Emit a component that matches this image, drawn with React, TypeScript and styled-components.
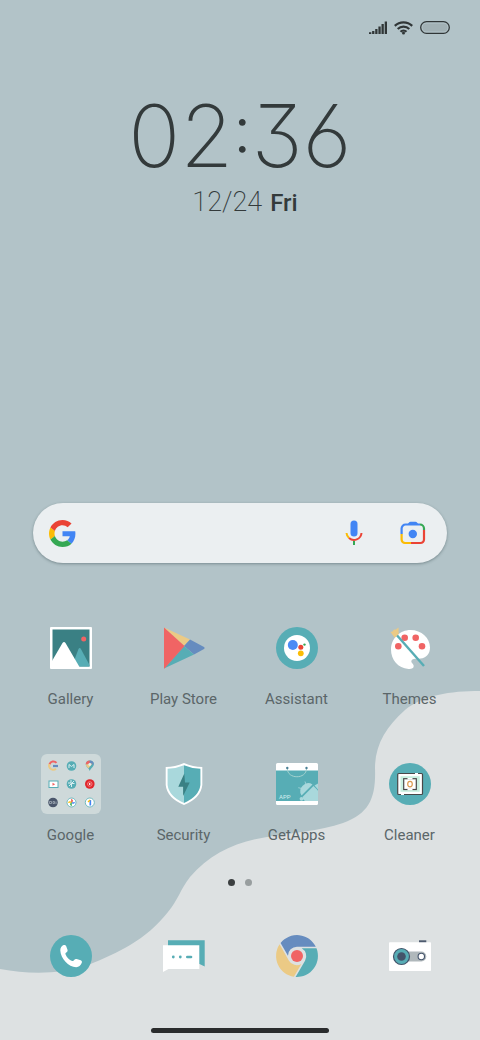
import React from 'react';
import styled, { createGlobalStyle } from 'styled-components';

const teal = '#57adb5';
const tealLight = '#a9d8dc';
const tealDark = '#3a8084';
const coral = '#f06464';
const sand = '#ebca85';
const indigo = '#668cbf';
const ink = '#333a3b';

const GlobalStyle = createGlobalStyle`
  *, *::before, *::after { box-sizing: border-box; }
  body { margin: 0; background: #dde1e2; font-family: Roboto, sans-serif; }
`;

const Screen = styled.div`
  position: relative;
  isolation: isolate;
  min-height: 100vh;
  display: flex;
  flex-direction: column;
  background: #b2c3c8;
  overflow: hidden;
`;

const Wallpaper = styled.svg`
  position: absolute;
  inset: 0;
  z-index: -1;
  width: 100%;
  height: 100%;
`;

const StatusBar = styled.header`
  display: flex;
  justify-content: flex-end;
  align-items: center;
  gap: 7px;
  padding: 20px 30px 0;
  height: 35px;
  color: #303637;
`;

const ClockWidget = styled.section`
  display: flex;
  flex-direction: column;
  align-items: center;
  padding-top: 51px;
  color: ${ink};
`;

const Time = styled.time`
  display: flex;
  align-items: center;
  font: 170 86px/100px Inter, sans-serif;
  font-feature-settings: "ss01", "cv09";
`;

const Colon = styled.span`
  font-size: 64px;
  font-weight: 260;
  font-feature-settings: "case";
`;

const DateLine = styled.p`
  display: flex;
  align-items: baseline;
  gap: 8px;
  margin: 0;
  padding: 0 0 0 10px;
  font-size: 27px;
  font-weight: 200;
  line-height: 32px;
`;

const Weekday = styled.span`
  font-size: 24px;
  font-weight: 500;
`;

const SearchBar = styled.form`
  display: flex;
  align-items: center;
  height: 60px;
  margin: auto 33px 0;
  padding: 0 18px 0 16px;
  border-radius: 30px;
  background: #ebeff1;
  box-shadow: 0 1px 3px rgba(50, 70, 75, 0.45);
`;

const SearchInput = styled.input`
  flex: 1;
  min-width: 0;
  height: 40px;
  margin: 0 12px;
  border: 0;
  outline: 0;
  background: transparent;
  font: 18px Roboto, sans-serif;
  color: ${ink};
`;

const SearchAction = styled.button`
  display: grid;
  place-items: center;
  width: 32px;
  height: 40px;
  padding: 0;
  border: 0;
  background: none;
  & + & { margin-left: 27px; }
`;

const IconGrid = styled.main`
  display: grid;
  grid-template-columns: repeat(4, 1fr);
  row-gap: 45px;
  padding: 55px 14px 0;
`;

const AppButton = styled.button`
  display: flex;
  flex-direction: column;
  align-items: center;
  gap: 11px;
  padding: 0;
  border: 0;
  background: none;
  color: #5b6669;
  font: 15px/20px Roboto, sans-serif;
`;

const IconSlot = styled.span`
  display: grid;
  place-items: center;
  height: 60px;
`;

const Folder = styled.span`
  width: 60px;
  height: 60px;
  border-radius: 6px;
  background: rgba(222, 231, 229, 0.62);
`;

const Pager = styled.nav`
  display: flex;
  justify-content: center;
  gap: 10px;
  padding-top: 34px;
`;

const PageDot = styled.button<{ $active?: boolean }>`
  width: 7px;
  height: 7px;
  padding: 0;
  border: 0;
  border-radius: 50%;
  background: ${(p) => (p.$active ? '#3b3f40' : '#989e9f')};
`;

const Dock = styled.footer`
  display: grid;
  grid-template-columns: repeat(4, 1fr);
  padding: 40px 14px 0;
`;

const HomeBar = styled.div`
  width: 37%;
  height: 5px;
  margin: 42px auto 7px;
  border-radius: 3px;
  background: #2a2c2d;
`;

function Icon({ children }: { children: React.ReactNode }) {
  return (
    <svg width="42" height="42" viewBox="0 0 42 42" overflow="visible" aria-hidden="true">
      {children}
    </svg>
  );
}

const GoogleG = () => (
  <svg width="27" height="27" viewBox="0 0 48 48" aria-hidden="true">
    <path fill="#fbbc05" d="M10.530 28.590c-.480-1.450-.760-2.990-.760-4.590s.270-3.140.760-4.590l-7.980-6.190C.920 16.460 0 20.120 0 24c0 3.880.920 7.540 2.560 10.780l7.970-6.190z" />
    <path fill="#4285f4" d="M46.980 24.550c0-1.570-.150-3.090-.380-4.550H24v9.020h12.940c-.580 2.960-2.260 5.480-4.780 7.180l7.730 6c4.510-4.180 7.090-10.360 7.090-17.650z" />
    <path fill="#34a853" d="M24 48c6.480 0 11.930-2.130 15.890-5.810l-7.730-6c-2.150 1.450-4.920 2.300-8.160 2.300-6.260 0-11.570-4.220-13.470-9.910l-7.980 6.190C6.510 42.620 14.620 48 24 48z" />
    <path fill="#ea4335" d="M24 9.500c3.540 0 6.710 1.220 9.210 3.600l6.850-6.850C35.900 2.380 30.470 0 24 0 14.620 0 6.510 5.380 2.560 13.220l7.980 6.190C12.430 13.720 17.740 9.500 24 9.500z" />
  </svg>
);

const Mic = () => (
  <svg width="18" height="26" viewBox="0 0 18 26" fill="none" strokeWidth="2" aria-hidden="true">
    <rect x="5.500" y="0.500" width="7" height="16" rx="3.500" fill="#4285f4" />
    <path d="M1.500 13A7.500 7.500 0 0 0 4 18" stroke="#fbbc05" />
    <path d="M4 18A7.500 7.500 0 0 0 16.500 13" stroke="#ea4335" />
    <path d="M9 21v4" stroke="#34a853" />
  </svg>
);

const Lens = () => (
  <svg width="26" height="24" viewBox="0 0 26 24" fill="none" strokeWidth="2.200" aria-hidden="true">
    <path d="M7 4 9 1.500Q9.500.7 10.500.7h5q1 0 1.500.8L19 4z" fill="#4285f4" />
    <path d="M1.600 13V7.500a4 4 0 0 1 4-4H20" stroke="#4285f4" />
    <path d="M20 3.500a4 4 0 0 1 4 4V9" stroke="#34a853" />
    <path d="M24 9v9.500a3.500 3.500 0 0 1-3.500 3.500H11" stroke="#ea4335" />
    <path d="M11 22H5a3.500 3.500 0 0 1-3.400-3.500V13" stroke="#fbbc05" />
    <circle cx="12.800" cy="13" r="4.200" fill="#4285f4" />
  </svg>
);

const Gallery = () => (
  <Icon>
    <rect width="42" height="42" rx="1" fill="#fff" />
    <path d="M2.500 2.500h37v37h-37z" fill={tealDark} />
    <path d="M22 39.500 28.500 22q1.200-2 2.400 0l8.600 16v1.500z" fill={teal} />
    <path d="M2 34 12.500 16q1.500-2 3 0L29.500 40H2z" fill="#fff" />
    <circle cx="33.700" cy="12" r="2.500" fill={coral} />
  </Icon>
);

const PlayStore = () => (
  <Icon>
    <path d="M1 .5 27 12.500 21 19z" fill={sand} />
    <path d="M27 12.500 41 20q1.500 1 0 2l-10 5.500L21 19z" fill={indigo} />
    <path d="M1 41.500 31 27.500 21 19z" fill={teal} />
    <path d="M1 .5 21.500 19 1.500 41.500H1z" fill={coral} />
  </Icon>
);

const Assistant = () => (
  <Icon>
    <circle cx="21" cy="21" r="21" fill={teal} />
    <circle cx="21" cy="21" r="13" fill="#fff" />
    <circle cx="16.800" cy="18" r="5" fill="#4c8bf5" />
    <circle cx="24.800" cy="20.300" r="2.500" fill="#ea4335" />
    <circle cx="24.800" cy="26.300" r="2.900" fill="#fbbc05" />
    <circle cx="28.500" cy="17.600" r="1.200" fill="#34a853" />
  </Icon>
);

const Themes = () => (
  <Icon>
    <path d="M21.500 3C32.500 3 41 11 41 20.500 41 27 37 31 31.500 31.500L28 32c-2.500-.7-5 0-5.600 1.800-.6 2 2.300 3.200 2.300 5.200 0 2.400-2.300 3.200-5.200 3C9 41.300 2 32.500 2 22.500 2 11.500 11 3 21.500 3z" fill="#fff" />
    <g fill={coral}>
      <circle cx="9.300" cy="19.300" r="3.300" />
      <circle cx="15.700" cy="10.700" r="3.300" />
      <circle cx="26.700" cy="10.700" r="3.300" />
      <circle cx="33" cy="19.300" r="3.300" />
    </g>
    <path d="M7.700 8 35 39" stroke={teal} strokeWidth="2.400" />
    <path d="m1.500 5 2-.6L5 2.500l1.500.2L9.500.5 9.700 7l-4 3.800z" fill={sand} />
  </Icon>
);

const Security = () => (
  <Icon>
    <path d="M21 0Q30 4 39.300 4v18Q38 35 21 42 4 35 2.700 22V4Q12 4 21 0z" fill="#fff" />
    <path d="M21 2.200Q13 5.600 4.600 5.800V22Q6 33.500 21 40z" fill={tealLight} />
    <path d="M21 2.200Q29 5.600 37.400 5.800V22Q36 33.500 21 40z" fill={teal} />
    <path d="m21.300 10.500-6 13.200h4.800V33l6.600-13.500H22z" fill={tealDark} />
  </Icon>
);

const BagLabel = styled.text`
  font: 6px Roboto, sans-serif;
  fill: #d6eef0;
`;

const GetApps = () => (
  <Icon>
    <rect width="42" height="42" rx="1.500" fill="#fff" />
    <path d="M0 7.500h42V38H0z" fill={teal} />
    <path d="M11.300 5.500c0 11 19.200 11 19.200 0" fill="none" stroke="#a4d2cf" strokeWidth="1" />
    <circle cx="11.300" cy="5" r="1.200" fill="#4a7f95" />
    <circle cx="30.500" cy="5" r="1.200" fill="#4a7f95" />
    <g fill={tealLight}>
      <path d="M25.500 32.500a8 8 0 0 1 11-11z" />
      <path d="M27 33.500 37.500 23l4.500 4.500V38H29q-3-2-2-4.500z" />
      <circle cx="25.500" cy="35.800" r="1.900" />
      <path d="m38.500 22.500 3.500-2v6z" />
      <path d="m25.800 25.500-3.500-.8M30 21.500l-1-3" stroke={tealLight} strokeWidth=".8" />
    </g>
    <BagLabel x="3" y="36">APP</BagLabel>
  </Icon>
);

const Cleaner = () => (
  <Icon>
    <circle cx="21" cy="21" r="21" fill={teal} />
    <rect x="8.700" y="10.500" width="24.800" height="21" rx="1" fill="#fff" stroke="#494849" strokeWidth="1.200" />
    <path d="M26 10.500h3M12 31.500h3" stroke="#fff" strokeWidth="1.200" />
    <rect x="11.500" y="13.200" width="19.200" height="15.600" fill="#c9f0e0" />
    <rect x="14.700" y="15.700" width="12.600" height="10.800" fill="#fff" stroke="#494849" strokeWidth="1.200" />
    <path d="M18.500 15.700h5M18.500 26.500h5" stroke="#fff" strokeWidth="1.600" />
    <ellipse cx="21" cy="21.100" rx="2.300" ry="2.800" fill="none" stroke="#d99a4e" strokeWidth="1.200" />
  </Icon>
);

const Phone = () => (
  <Icon>
    <circle cx="21" cy="21" r="21" fill={teal} />
    <path d="M10.300 15.500c-.2-2.500 1.500-4.500 3.300-5.400 1.100-.5 2.100 0 2.500 1l1.400 3.600c.3 1-.1 1.900-.9 2.500-1 .7-1.500 1.300-1 2.200 1.300 3.100 3.600 5.300 6.500 6.500.9.400 1.500-.1 2.100-1 .6-.9 1.500-1.200 2.500-.9l4 1.300c1.100.400 1.500 1.400 1.100 2.500-1 2.600-3 4.400-5.600 4.400-7.700-.3-15.500-8.400-15.900-16.700z" fill="#fff" />
  </Icon>
);

const Messages = () => (
  <Icon>
    <path d="M5 5.300h36.700v26.300L36.500 29H5z" fill={teal} />
    <path d="M0 10.300h36.300V34H5.500L0 37z" fill="#fff" />
    <circle cx="10.300" cy="22" r="1.400" fill={teal} />
    <circle cx="17.300" cy="22" r="1.400" fill={teal} />
    <path d="M24.300 22h3.700" stroke={teal} strokeWidth="2.600" strokeLinecap="round" />
  </Icon>
);

const chromeBlade = 'M40.500 13.300H25.700A9 9 0 0 1 29.050 25.650L19.600 41.900A21 21 0 0 0 40.500 13.300z';

const Chrome = () => (
  <Icon>
    <path d={chromeBlade} fill={teal} />
    <path d={chromeBlade} fill={sand} transform="rotate(120 21 21)" />
    <path d={chromeBlade} fill={indigo} transform="rotate(240 21 21)" />
    <circle cx="21" cy="21" r="6" fill={coral} />
  </Icon>
);

const Camera = () => (
  <Icon>
    <path d="M30 5.300h7.300v3H30z" fill="#4d5a6e" />
    <rect y="7.300" width="42" height="28.700" rx=".8" fill="#fff" />
    <path d="M14 16.500h18.300a5 5 0 0 1 0 10H14z" fill="#b0b8bb" />
    <circle cx="12.500" cy="21.500" r="8" fill={teal} stroke="#44546b" strokeWidth="1.200" />
    <circle cx="12.500" cy="21.500" r="4.300" fill="#44546b" />
    <circle cx="32.300" cy="21.500" r="3.200" fill="#fff" stroke="#44546b" strokeWidth="1.100" />
  </Icon>
);

const GoogleFolder = () => (
  <Folder>
    <svg width="60" height="60" viewBox="0 0 60 60" fill="none" aria-hidden="true">
      <path d="M15.500 8.900A4 4 0 0 0 8.500 10.500" stroke={coral} strokeWidth="2" />
      <path d="M8.500 10a4 4 0 0 0 .8 4.500" stroke={sand} strokeWidth="2" />
      <path d="M9 14a4 4 0 0 0 6 .8" stroke={sand} strokeWidth="2" />
      <path d="M12 12h5" stroke={indigo} strokeWidth="2.200" />
      <circle cx="30.500" cy="12" r="4.800" fill={teal} />
      <path d="M28 14v-3.500l2.500 2 2.500-2V14" stroke="#d9eef0" />
      <path d="M48.800 17c-1-3-4-4.500-4-6.500a4 4 0 0 1 8 0c0 2-3 3.500-4 6.500z" fill={teal} />
      <path d="M44.800 10.500a4 4 0 0 1 4-4v4z" fill={coral} />
      <path d="M48.800 6.500a4 4 0 0 1 4 4h-4z" fill={indigo} />
      <path d="M44.800 10.500c0 1.500 1.500 2.500 2.600 4l4-5z" fill={sand} />
      <circle cx="48.800" cy="10.500" r="1.400" fill="#e6eeee" />
      <rect x="8" y="27" width="9" height="6.500" fill="#fff" stroke={teal} />
      <path d="M11.500 28.700v3l2.700-1.500z" fill={coral} />
      <circle cx="30.500" cy="30" r="4.800" fill={teal} />
      <path d="M30 26v3h-3m6.500.5h-3v3.500M28 32l5-5" stroke="#d9eef0" strokeWidth="1" />
      <circle cx="48.800" cy="30" r="4.800" fill="#e0262c" />
      <circle cx="48.800" cy="30" r="2.300" stroke="#ffb6b4" strokeWidth=".6" />
      <path d="m48 28.800 2 1.200-2 1.200z" fill="#fff" />
      <circle cx="12" cy="48.500" r="4.800" fill="#4a566b" />
      <path d="M8.500 47.500h2v2h-2zm3.500 0h1.500v2H12zm3 0v2.500" stroke="#aeb7c2" strokeWidth=".7" />
      <circle cx="30.500" cy="48.500" r="4.500" fill="#fff" stroke={teal} strokeWidth=".8" />
      <path d="M30.500 48.500v-3.400a1.900 1.900 0 0 1 0 3.400z" fill="#ea4335" stroke="#ea4335" strokeWidth=".5" />
      <path d="M30.500 48.500h3.400a1.900 1.900 0 0 1-3.400 0z" fill="#4285f4" stroke="#4285f4" strokeWidth=".5" />
      <path d="M30.500 48.500v3.400a1.900 1.900 0 0 1 0-3.400z" fill="#34a853" stroke="#34a853" strokeWidth=".5" />
      <path d="M30.500 48.500h-3.400a1.900 1.900 0 0 1 3.400 0z" fill="#fbbc05" stroke="#fbbc05" strokeWidth=".5" />
      <circle cx="48.800" cy="48.500" r="4.500" fill="#fff" stroke={teal} strokeWidth=".8" />
      <path d="M49.300 46v5.500" stroke="#4285f4" strokeWidth="1.700" />
      <path d="m47 48 2-2" stroke="#fbbc05" strokeWidth="1.300" />
    </svg>
  </Folder>
);

const apps = [
  { name: 'Gallery', icon: <Gallery /> },
  { name: 'Play Store', icon: <PlayStore /> },
  { name: 'Assistant', icon: <Assistant /> },
  { name: 'Themes', icon: <Themes /> },
  { name: 'Google', icon: <GoogleFolder /> },
  { name: 'Security', icon: <Security /> },
  { name: 'GetApps', icon: <GetApps /> },
  { name: 'Cleaner', icon: <Cleaner /> },
];

const dockApps = [
  { name: 'Phone', icon: <Phone /> },
  { name: 'Messages', icon: <Messages /> },
  { name: 'Chrome', icon: <Chrome /> },
  { name: 'Camera', icon: <Camera /> },
];

export default function App() {
  return (
    <>
      <GlobalStyle />
      <Screen>
        <Wallpaper viewBox="0 0 480 1040" preserveAspectRatio="none" aria-hidden="true">
          <path
            fill="#dde1e2"
            d="M480 691C450 691 423 695 405 710C386 727 375 745 375 768C376 797 370 813 343 823C320 831 290 833 267 837C235 842 210 854 190 877C180 890 178 900 168 912C146 940 118 953 88 965C58 975 28 974 0 969V1040H480Z"
          />
        </Wallpaper>
        <StatusBar>
          <svg width="18" height="14" viewBox="0 0 18 14" fill="currentColor" aria-hidden="true">
            <path d="M0 11.300h2.300V13H0zM3.100 10h2.300v3H3.100zM6.200 8h2.300v5H6.200zM9.400 5.500h2.300V13H9.400zM12.500 3h2.300v10h-2.300zM15.700.5H18V13h-2.300z" />
          </svg>
          <svg width="19" height="14" viewBox="0 0 19 14" fill="none" stroke="currentColor" strokeWidth="2.200" aria-hidden="true">
            <path d="M.8 4.900a12.500 12.500 0 0 1 17.400 0M3.700 8a8.300 8.300 0 0 1 11.600 0M6.500 10.800a4.300 4.300 0 0 1 6 0" />
            <circle cx="9.500" cy="12" r="1.500" fill="currentColor" stroke="none" />
          </svg>
          <svg width="30" height="13" viewBox="0 0 30 13" aria-hidden="true">
            <rect x=".7" y=".7" width="28.600" height="11.600" rx="5.800" fill="none" stroke="currentColor" strokeWidth="1.300" />
            <rect x="2.500" y="2.500" width="25" height="8" rx="4" fill="#a2b1b5" />
          </svg>
        </StatusBar>
        <ClockWidget>
          <Time dateTime="02:36">
            <span>02</span>
            <Colon>:</Colon>
            <span>36</span>
          </Time>
          <DateLine>
            <span>12/24</span>
            <Weekday>Fri</Weekday>
          </DateLine>
        </ClockWidget>
        <SearchBar role="search">
          <GoogleG />
          <SearchInput type="search" aria-label="Search" />
          <SearchAction type="button" aria-label="Voice search"><Mic /></SearchAction>
          <SearchAction type="button" aria-label="Lens"><Lens /></SearchAction>
        </SearchBar>
        <IconGrid>
          {apps.map((app) => (
            <AppButton key={app.name} type="button">
              <IconSlot>{app.icon}</IconSlot>
              {app.name}
            </AppButton>
          ))}
        </IconGrid>
        <Pager aria-label="Home pages">
          <PageDot type="button" aria-label="Page 1" $active />
          <PageDot type="button" aria-label="Page 2" />
        </Pager>
        <Dock>
          {dockApps.map((app) => (
            <AppButton key={app.name} type="button" aria-label={app.name}>
              <IconSlot>{app.icon}</IconSlot>
            </AppButton>
          ))}
        </Dock>
        <HomeBar />
      </Screen>
    </>
  );
}
